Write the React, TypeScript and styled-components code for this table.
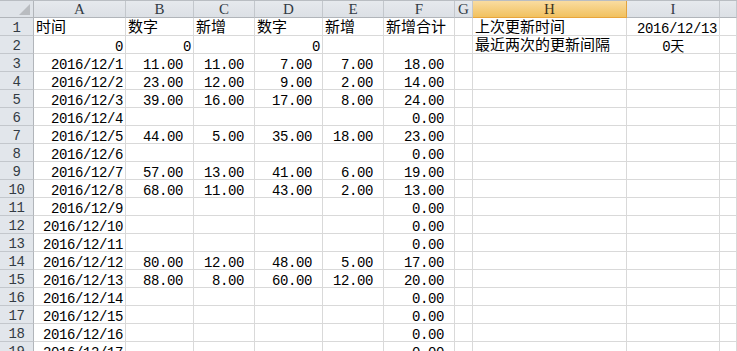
import React from "react";
import styled, { createGlobalStyle } from "styled-components";

const GlobalStyle = createGlobalStyle`
  html, body {
    margin: 0;
    padding: 0;
    background: #ffffff;
    overflow: hidden;
  }
`;

type Align = "left" | "right" | "center";

interface CellData {
  v: string;
  align?: Align;
  fmt?: boolean;
  cjk?: boolean;
}

const COLS = ["A", "B", "C", "D", "E", "F", "G", "H", "I", ""];
const ACTIVE_COL = "H";

const t = (v: string): CellData => ({ v, align: "left", cjk: true });
const n = (v: string): CellData => ({ v, align: "right", fmt: true });
const d = (v: string): CellData => ({ v, align: "right" });
const e: CellData = { v: "" };

const numbers: Record<number, string[]> = {
  3: ["11.00", "11.00", "7.00", "7.00", "18.00"],
  4: ["23.00", "12.00", "9.00", "2.00", "14.00"],
  5: ["39.00", "16.00", "17.00", "8.00", "24.00"],
  7: ["44.00", "5.00", "35.00", "18.00", "23.00"],
  9: ["57.00", "13.00", "41.00", "6.00", "19.00"],
  10: ["68.00", "11.00", "43.00", "2.00", "13.00"],
  14: ["80.00", "12.00", "48.00", "5.00", "17.00"],
  15: ["88.00", "8.00", "60.00", "12.00", "20.00"],
};

const buildRows = (): CellData[][] => {
  const rows: CellData[][] = [];
  rows.push([
    t("时间"), t("数字"), t("新增"), t("数字"), t("新增"), t("新增合计"),
    e, t("上次更新时间"), d("2016/12/13"), e,
  ]);
  rows.push([
    d("0"), d("0"), e, d("0"), e, e, e,
    t("最近两次的更新间隔"), { v: "0天", align: "center" }, e,
  ]);
  for (let r = 3; r <= 19; r++) {
    const vals = numbers[r];
    const date = d(`2016/12/${r - 2}`);
    const mid = vals
      ? vals.slice(0, 4).map(n)
      : [e, e, e, e];
    const total = vals ? n(vals[4]) : n("0.00");
    rows.push([date, ...mid, total, e, e, e, e]);
  }
  return rows;
};

const Sheet = styled.div`
  display: grid;
  grid-template-columns: 34px 92px 68px 61px 68px 61px 71px 18px 154px 93px 1fr;
  grid-auto-rows: 18px;
  grid-template-rows: 17px;
  border-top: 1px solid #b9bdc2;
  width: 737px;
  height: 350px;
  overflow: hidden;
  background: #ffffff;
`;

const Corner = styled.div`
  position: relative;
  box-sizing: border-box;
  background: #dfe3e8;
  border-right: 1px solid #b1b5ba;
  border-bottom: 1px solid #b1b5ba;
`;

const CornerMark = styled.svg`
  position: absolute;
  right: 3px;
  bottom: 2px;
`;

const ColHead = styled.div<{ $active?: boolean }>`
  box-sizing: border-box;
  display: flex;
  align-items: center;
  justify-content: center;
  background: ${(p) =>
    p.$active
      ? "linear-gradient(#f9dca0, #f1c15f)"
      : "linear-gradient(#e6e9ed, #dce0e5)"};
  border-right: 1px solid ${(p) => (p.$active ? "#e2a33e" : "#c3c7cc")};
  border-bottom: 1px solid ${(p) => (p.$active ? "#e8a53c" : "#b1b5ba")};
  color: ${(p) => (p.$active ? "#3d3520" : "#333b44")};
  font-family: "Liberation Serif", "Noto Sans CJK SC", serif;
  font-size: 15px;
  line-height: 16px;
`;

const RowHead = styled.div`
  box-sizing: border-box;
  display: flex;
  align-items: flex-end;
  justify-content: center;
  background: #e2e6eb;
  border-right: 1px solid #b1b5ba;
  border-bottom: 1px solid #c3c7cc;
  color: #333b44;
  font-family: "Liberation Mono", monospace;
  font-size: 14px;
  letter-spacing: -0.4px;
  line-height: 10px;
  padding-bottom: 2px;
`;

const Cell = styled.div<{ $align?: Align; $fmt?: boolean; $cjk?: boolean }>`
  box-sizing: border-box;
  display: flex;
  align-items: flex-end;
  justify-content: ${(p) =>
    p.$align === "right"
      ? "flex-end"
      : p.$align === "center"
      ? "center"
      : "flex-start"};
  border-right: 1px solid #d9d9d9;
  border-bottom: 1px solid #d9d9d9;
  padding: 0 ${(p) => (p.$fmt ? "10px" : "2px")} 1px 2px;
  color: #000000;
  font-family: "Liberation Mono", "Noto Sans CJK SC", monospace;
  font-size: ${(p) => (p.$cjk ? "15px" : "14px")};
  letter-spacing: ${(p) => (p.$cjk ? "0" : "-0.4px")};
  line-height: 10px;
  white-space: nowrap;
  overflow: visible;
`;

const App: React.FC = () => {
  const rows = buildRows();
  return (
    <>
      <GlobalStyle />
      <Sheet>
        <Corner>
          <CornerMark width="11" height="11" viewBox="0 0 11 11">
            <polygon points="11,0 11,11 0,11" fill="#b9bcc0" />
          </CornerMark>
        </Corner>
        {COLS.map((c, i) => (
          <ColHead key={`h${i}`} $active={c === ACTIVE_COL}>
            {c}
          </ColHead>
        ))}
        {rows.map((row, r) => (
          <React.Fragment key={`r${r}`}>
            <RowHead>{r + 1}</RowHead>
            {row.map((cell, c) => (
              <Cell
                key={`c${r}-${c}`}
                $align={cell.align}
                $fmt={cell.fmt}
                $cjk={cell.cjk}
              >
                {cell.v}
              </Cell>
            ))}
          </React.Fragment>
        ))}
      </Sheet>
    </>
  );
};

export default App;
